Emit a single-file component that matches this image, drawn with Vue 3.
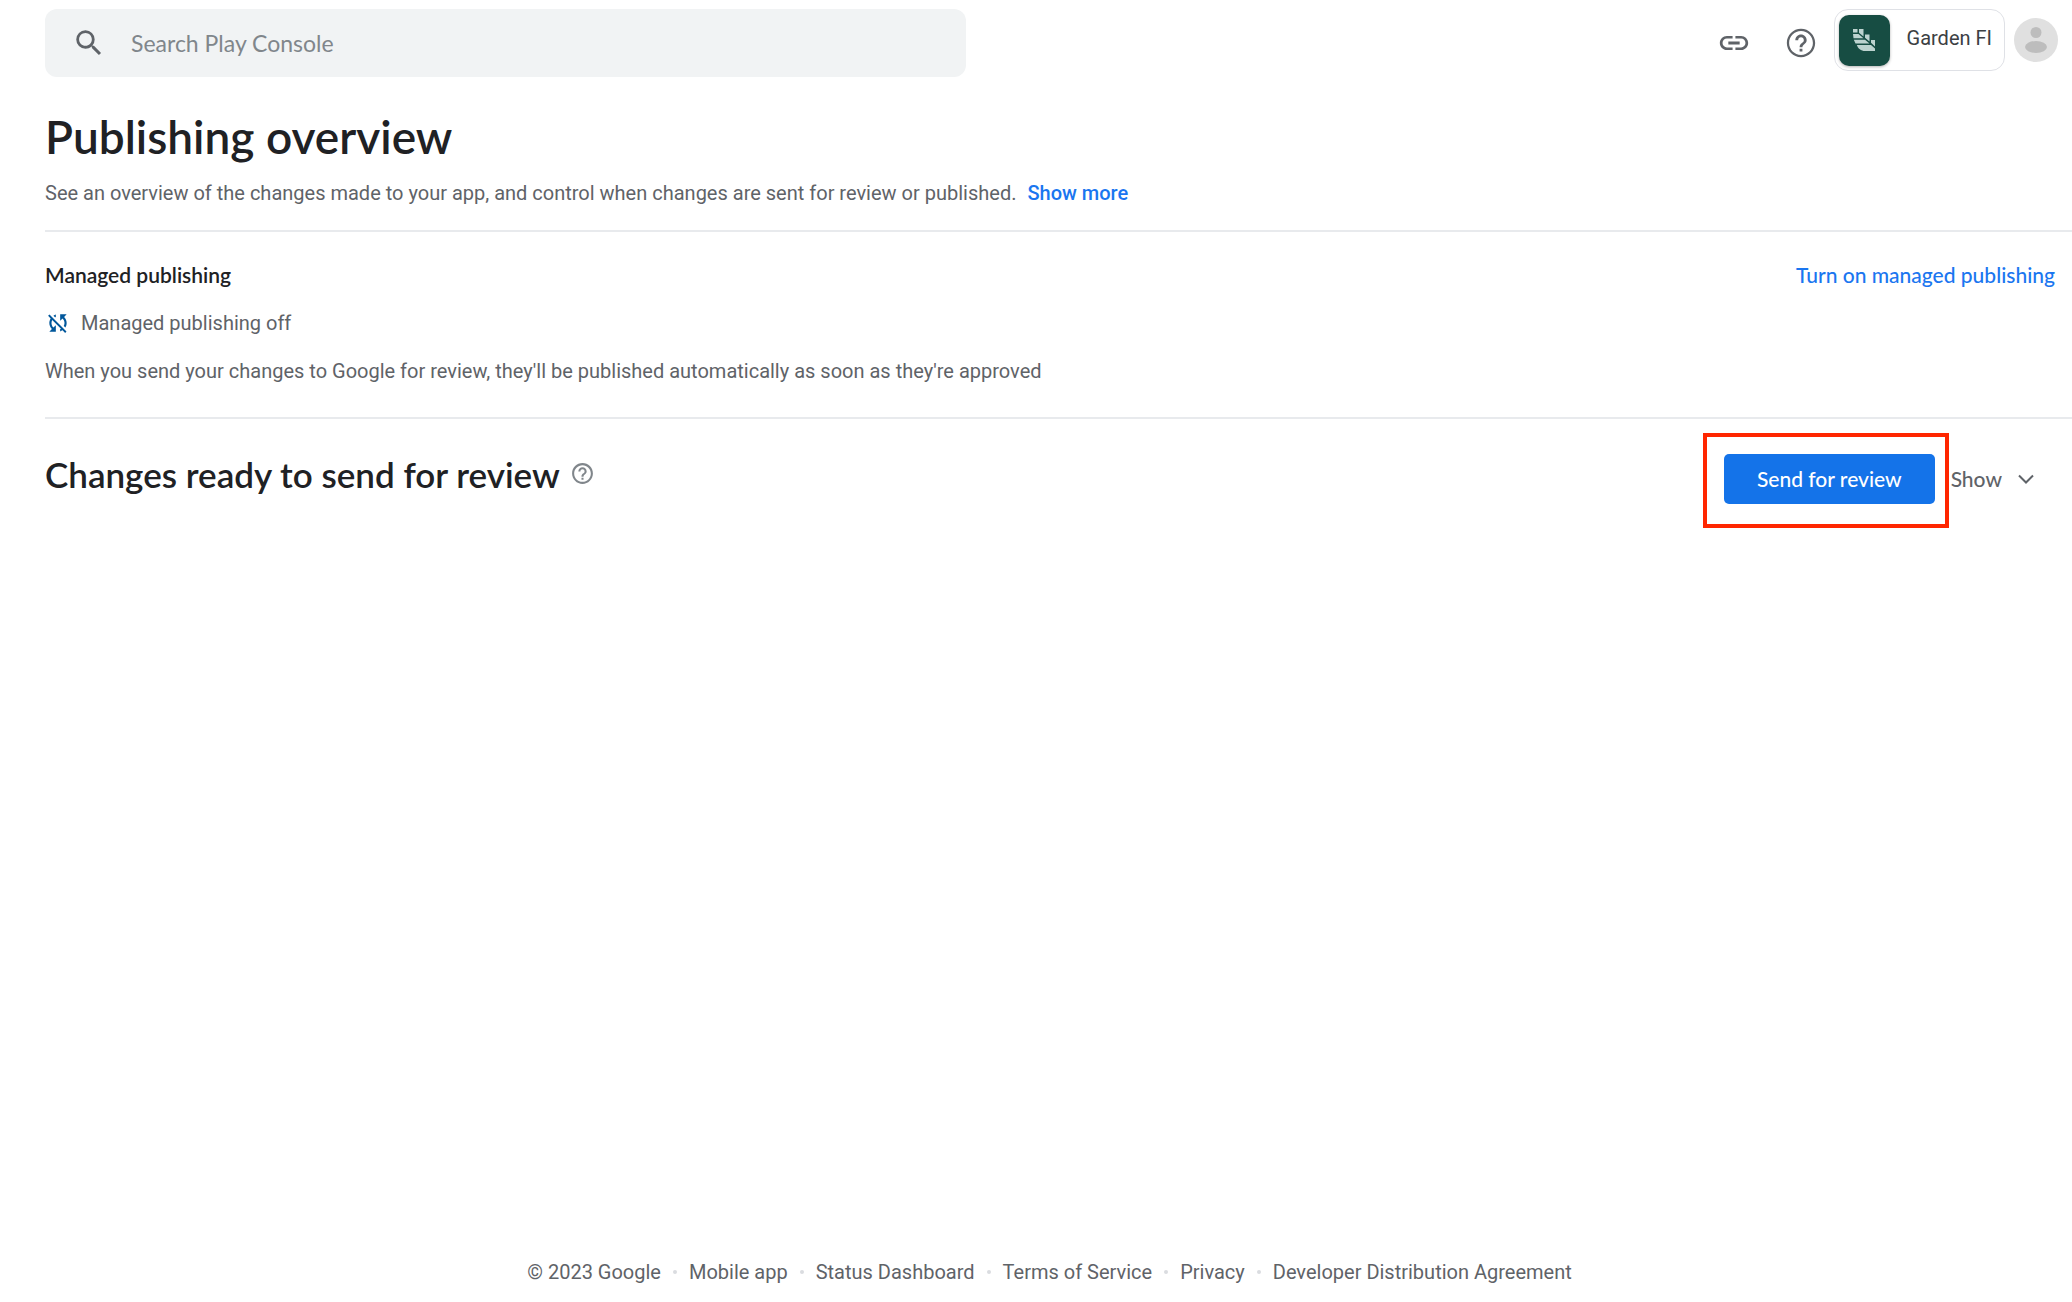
<script setup>
import { ref } from 'vue'

const query = ref('')
const footerLinks = [
  'Mobile app',
  'Status Dashboard',
  'Terms of Service',
  'Privacy',
  'Developer Distribution Agreement',
]
</script>

<template>
  <div class="page">
    <header class="topbar">
      <label class="search">
        <svg class="icon" viewBox="0 0 24 24" aria-hidden="true">
          <path d="M15.5 14h-.79l-.28-.27A6.47 6.47 0 0 0 16 9.5 6.5 6.5 0 1 0 9.5 16c1.61 0 3.09-.59 4.23-1.57l.27.28v.79l5 4.99L20.49 19l-4.99-5zm-6 0C7.01 14 5 11.99 5 9.5S7.01 5 9.5 5 14 7.01 14 9.5 11.99 14 9.5 14z" />
        </svg>
        <input v-model="query" type="text" placeholder="Search Play Console" aria-label="Search Play Console" />
      </label>

      <div class="tools">
        <button type="button" aria-label="Copy link">
          <svg class="icon" viewBox="0 0 24 24" aria-hidden="true">
            <path d="M3.9 12c0-1.71 1.39-3.1 3.1-3.1h4V7H7c-2.76 0-5 2.24-5 5s2.24 5 5 5h4v-1.9H7c-1.71 0-3.1-1.39-3.1-3.1zM8 13h8v-2H8v2zm9-6h-4v1.9h4c1.71 0 3.1 1.39 3.1 3.1s-1.39 3.1-3.1 3.1h-4V17h4c2.76 0 5-2.24 5-5s-2.24-5-5-5z" />
          </svg>
        </button>
        <button type="button" aria-label="Help">
          <svg class="icon" viewBox="0 0 24 24" aria-hidden="true">
            <path d="M11 18h2v-2h-2v2zm1-16C6.48 2 2 6.48 2 12s4.48 10 10 10 10-4.480 10-10S17.52 2 12 2zm0 18.4c-4.6 0-8.4-3.8-8.4-8.4S7.4 3.6 12 3.6s8.4 3.8 8.4 8.4-3.8 8.4-8.4 8.4zM12 6c-2.21 0-4 1.79-4 4h2c0-1.1.9-2 2-2s2 .9 2 2c0 2-3 1.75-3 5h2c0-2.25 3-2.5 3-5 0-2.21-1.79-4-4-4z" />
          </svg>
        </button>
      </div>

      <div class="account">
        <button class="app-chip" type="button">
          <span class="app-logo">
            <svg viewBox="0 0 24 24" aria-hidden="true">
              <path d="M1 1h4.500v3.500H1zM7 1h4.500v7.500L7 4.800zM13 6.500h4.500v7L13 9.800zM19 12h4v6.500l-4-3.700zM1 6h5.500l5 4.200H1.500zM1.800 11.700H13l4.500 3.800H3.500zM4.800 17H19l4 3.400V23H13c-4 0-7-2.500-8.200-6z" />
            </svg>
          </span>
          <span class="app-name">Garden FI</span>
        </button>
        <button class="avatar" type="button" aria-label="Account">
          <svg viewBox="0 0 44 44" aria-hidden="true">
            <circle cx="22" cy="22" r="22" fill="#e0e0e0" />
            <circle cx="22" cy="14.5" r="5.5" fill="#bdbdbd" />
            <ellipse cx="22" cy="29" rx="11" ry="6" fill="#bdbdbd" />
          </svg>
        </button>
      </div>
    </header>

    <main>
      <section class="intro">
        <h1>Publishing overview</h1>
        <p>
          See an overview of the changes made to your app, and control when changes are sent for review or published.
          <a class="more" href="#">Show more</a>
        </p>
      </section>

      <section class="managed">
        <div class="managed-head">
          <h2>Managed publishing</h2>
          <a href="#">Turn on managed publishing</a>
        </div>
        <p class="status">
          <svg viewBox="0 0 24 24" aria-hidden="true">
            <path d="M10 6.35V4.26c-.8.21-1.55.54-2.23.96l1.46 1.46c.25-.12.5-.24.77-.33zM2.86 5.41l2.36 2.36C4.45 8.99 4 10.44 4 12c0 2.21.91 4.2 2.36 5.64L4 20h6v-6l-2.24 2.24C6.68 15.15 6 13.66 6 12c0-1 .25-1.94.68-2.77l8.08 8.08c-.25.13-.5.25-.77.34v2.09c.8-.21 1.55-.54 2.23-.96l2.36 2.36 1.27-1.27L4.14 4.14 2.86 5.41zM20 4h-6v6l2.24-2.24C17.32 8.85 18 10.34 18 12c0 1-.25 1.94-.68 2.77l1.46 1.46C19.55 15.01 20 13.56 20 12c0-2.21-.91-4.2-2.36-5.64L20 4z" />
          </svg>
          Managed publishing off
        </p>
        <p>When you send your changes to Google for review, they'll be published automatically as soon as they're approved</p>
      </section>

      <section class="changes">
        <div class="changes-title">
          <h2>Changes ready to send for review</h2>
          <button class="hint" type="button" aria-label="About changes ready to send">
            <svg viewBox="0 0 24 24" aria-hidden="true">
              <path d="M11 18h2v-2h-2v2zm1-16C6.48 2 2 6.48 2 12s4.48 10 10 10 10-4.48 10-10S17.52 2 12 2zm0 18c-4.41 0-8-3.59-8-8s3.59-8 8-8 8 3.59 8 8-3.59 8-8 8zm0-14c-2.21 0-4 1.79-4 4h2c0-1.1.9-2 2-2s2 .9 2 2c0 2-3 1.75-3 5h2c0-2.25 3-2.5 3-5 0-2.21-1.79-4-4-4z" />
            </svg>
          </button>
        </div>
        <div class="highlight">
          <button class="primary" type="button">Send for review</button>
        </div>
        <button class="show" type="button">
          Show
          <svg viewBox="0 0 24 24" aria-hidden="true">
            <path d="M5 8.5l7 7 7-7" />
          </svg>
        </button>
      </section>
    </main>

    <footer class="footer">
      <span>© 2023 Google</span>
      <template v-for="label in footerLinks" :key="label">
        <i class="dot" aria-hidden="true"></i>
        <a href="#">{{ label }}</a>
      </template>
    </footer>
  </div>
</template>

<style>
body {
  margin: 0;
  background: #fff;
}
</style>

<style scoped>
.page {
  --display: Lato, "Open Sans", sans-serif;
  --body: Roboto, "Liberation Sans", sans-serif;
  box-sizing: border-box;
  min-height: 100vh;
  display: flex;
  flex-direction: column;
  padding-left: 45px;
  color: #5f6368;
  font: 400 20px/28px var(--body);
}

h1,
h2,
p {
  margin: 0;
}

button {
  margin: 0;
  padding: 0;
  border: 0;
  background: none;
  color: inherit;
  font: inherit;
  cursor: pointer;
}

svg {
  display: block;
  flex: none;
  fill: currentColor;
}

a {
  color: #1a76f0;
  text-decoration: none;
}

.icon {
  width: 34px;
  height: 34px;
}

.topbar {
  display: flex;
  align-items: flex-start;
  padding: 9px 14px 0 0;
}

.search {
  flex: 0 1 921px;
  box-sizing: border-box;
  height: 68px;
  display: flex;
  align-items: center;
  gap: 25px;
  padding: 0 27px;
  border-radius: 12px;
  background: #f1f3f4;
}

.search input {
  flex: 1;
  min-width: 0;
  padding: 0;
  border: 0;
  outline: 0;
  background: none;
  color: #202124;
  font: 400 23px/28px var(--display);
}

.search input::placeholder {
  color: #80868b;
  opacity: 1;
}

.tools {
  height: 68px;
  display: flex;
  align-items: center;
  gap: 33px;
  margin-left: auto;
  padding-right: 16px;
}

.account {
  display: flex;
  align-items: center;
  gap: 9px;
}

.app-chip {
  box-sizing: border-box;
  height: 62px;
  display: flex;
  align-items: center;
  gap: 17px;
  padding: 0 12px 0 4px;
  border: 1px solid #dfe1e6;
  border-radius: 14px;
  color: #3c4043;
}

.app-logo {
  width: 51px;
  height: 51px;
  display: flex;
  align-items: center;
  justify-content: center;
  border-radius: 10px;
  background: #174d43;
  box-shadow: 0 1px 3px rgba(0, 0, 0, 0.3);
}

.app-logo svg {
  width: 24px;
  height: 24px;
  fill: #bdd3cf;
}

.app-name {
  padding-bottom: 4px;
}

.avatar svg {
  width: 44px;
  height: 44px;
}

.intro {
  padding: 32px 0 23px;
  border-bottom: 2px solid #e8eaed;
}

.intro h1 {
  margin-bottom: 14px;
  color: #202124;
  font: 600 46px/56px var(--display);
}

.more {
  margin-left: 6px;
  font-weight: 500;
}

.managed {
  display: flex;
  flex-direction: column;
  gap: 20px;
  padding: 29px 0 32px;
  border-bottom: 2px solid #e8eaed;
}

.managed-head {
  display: flex;
  justify-content: space-between;
  padding-right: 17px;
  font: 500 21px/28px var(--display);
}

.managed-head h2 {
  color: #202124;
  font: 600 21px/28px var(--display);
}

.status {
  display: flex;
  align-items: center;
  gap: 10px;
}

.status svg {
  width: 26px;
  height: 26px;
  fill: #01579b;
}

.changes {
  display: flex;
  align-items: center;
  padding: 14px 34px 0 0;
}

.changes-title {
  display: flex;
  align-items: center;
  gap: 10px;
  margin-right: auto;
  padding-bottom: 14px;
}

.changes-title h2 {
  color: #202124;
  font: 600 35px/44px var(--display);
}

.hint svg {
  width: 25px;
  height: 25px;
  fill: #80868b;
}

.highlight {
  padding: 17px 10px 20px 17px;
  border: 4px solid #ff2600;
}

.primary {
  display: block;
  height: 50px;
  padding: 0 33px;
  border-radius: 5px;
  background: #1473e9;
  color: #fff;
  font: 500 21px/28px var(--display);
}

.show {
  display: flex;
  align-items: center;
  gap: 12px;
  margin-left: 2px;
  padding-bottom: 4px;
  font: 500 21px/28px var(--display);
}

.show svg {
  width: 24px;
  height: 24px;
  fill: none;
  stroke: currentColor;
  stroke-width: 2;
}

.footer {
  display: flex;
  align-items: center;
  justify-content: center;
  gap: 12px;
  margin-top: auto;
  padding: 32px 18px 16px 0;
}

.footer a {
  color: inherit;
}

.dot {
  width: 4px;
  height: 4px;
  border-radius: 50%;
  background: #dadce0;
}
</style>
